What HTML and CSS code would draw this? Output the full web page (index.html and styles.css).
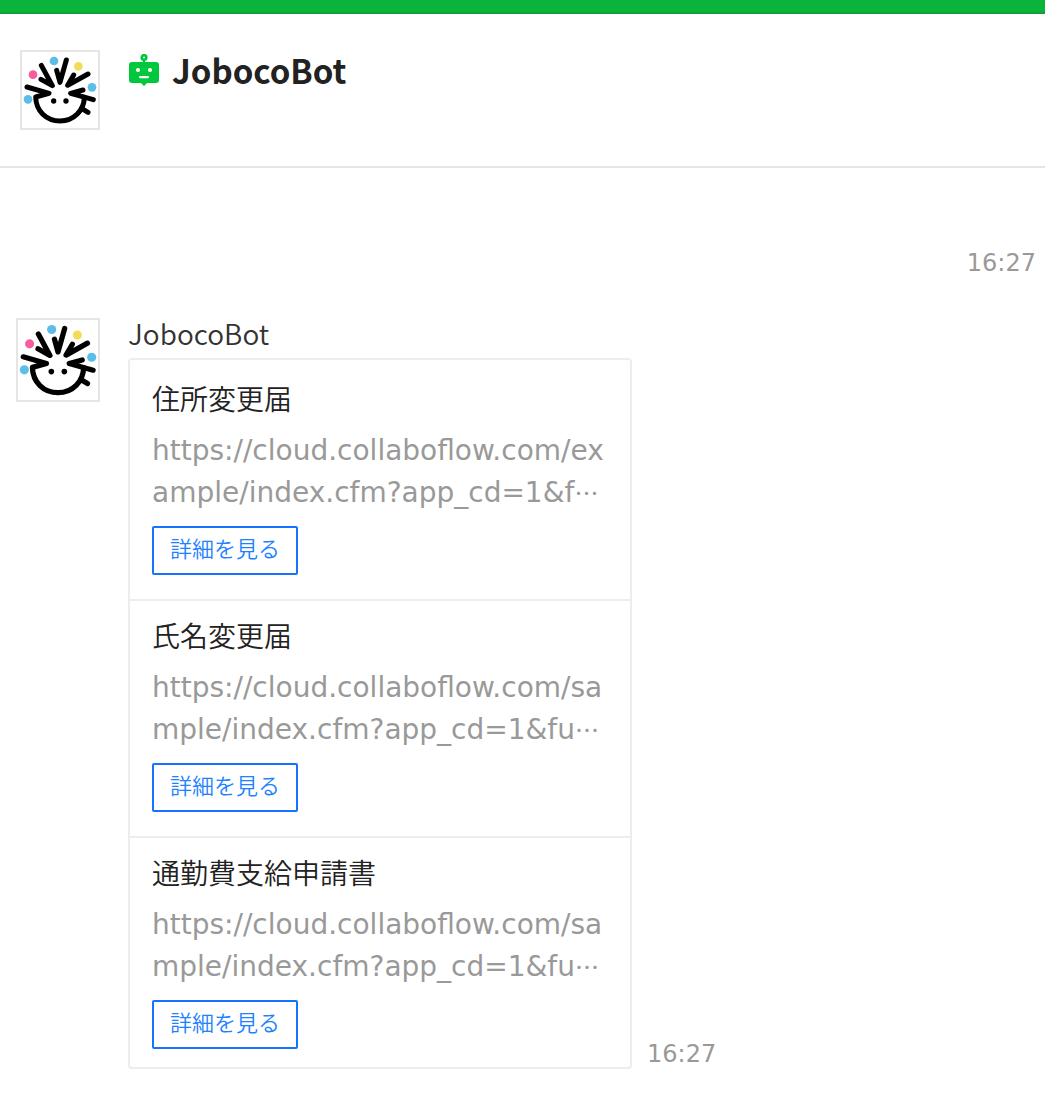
FILE: index.html
```html
<!DOCTYPE html>
<html lang="ja">
<head>
  <meta charset="utf-8">
  <title>JobocoBot</title>
  <meta name="viewport" content="width=device-width, initial-scale=1">
  <link rel="stylesheet" href="styles.css">
</head>
<body>
  <!-- shared avatar drawing -->
  <svg class="symbols" aria-hidden="true">
    <symbol id="joboco" viewBox="66 156 228 228">
      <g fill="none" stroke="#000" stroke-width="15" stroke-linecap="round" stroke-linejoin="round">
        <path d="M81 261L147 280L107 291C108 333 139 363 180 363C222 363 252 331 253 292"/>
        <path d="M249 270L212 280L280 299"/>
        <path d="M246 326L264 337"/>
        <path d="M124 196L157 257L123 238"/>
        <path d="M170 211L180 247L199 180"/>
        <path d="M221 225L203 256L264 222"/>
      </g>
      <circle cx="161" cy="303" r="8"/>
      <circle cx="198" cy="303" r="8"/>
      <circle cx="99" cy="224" r="13" fill="#f75c9d"/>
      <circle cx="162" cy="183" r="13" fill="#5bbde8"/>
      <circle cx="235" cy="199" r="13" fill="#f3dd58"/>
      <circle cx="276" cy="262" r="13" fill="#5bbde8"/>
      <circle cx="84" cy="298" r="13" fill="#5bbde8"/>
    </symbol>
  </svg>

  <div class="top-bar"></div>
  <header class="header">
    <svg class="avatar" role="img" aria-label="JobocoBot"><use href="#joboco"/></svg>
    <div class="header-name">
      <svg class="bot-icon" viewBox="0 0 32 32" aria-hidden="true">
        <circle cx="16" cy="3.5" r="2.3" fill="none" stroke="#00c73c" stroke-width="2.6"/>
        <path d="M15 5h2v4h-2z" fill="#00c73c"/>
        <path d="M4 8h24q3 0 3 3v15q0 3-3 3h-9l-3 3-3-3H4q-3 0-3-3V11q0-3 3-3z" fill="#00c73c"/>
        <circle cx="10" cy="16" r="2.1" fill="#fff"/>
        <circle cx="22" cy="16" r="2.1" fill="#fff"/>
        <rect x="11" y="22" width="10" height="2.2" rx="1" fill="#fff"/>
      </svg>
      <h1 class="title">JobocoBot</h1>
    </div>
  </header>

  <main class="chat">
    <div class="sent-time">16:27</div>
    <div class="message">
      <svg class="avatar avatar-large" role="img" aria-label="JobocoBot"><use href="#joboco"/></svg>
      <div class="message-body">
        <div class="sender">JobocoBot</div>
        <div class="bubble-row">
          <ul class="list">
            <li class="item">
              <h2 class="item-title">住所変更届</h2>
              <p class="item-url">https://cloud.collaboflow.com/ex<br>ample/index.cfm?app_cd=1&amp;f<span class="dots">…</span></p>
              <button class="detail" type="button">詳細を見る</button>
            </li>
            <li class="item">
              <h2 class="item-title">氏名変更届</h2>
              <p class="item-url">https://cloud.collaboflow.com/sa<br>mple/index.cfm?app_cd=1&amp;fu<span class="dots">…</span></p>
              <button class="detail" type="button">詳細を見る</button>
            </li>
            <li class="item">
              <h2 class="item-title">通勤費支給申請書</h2>
              <p class="item-url">https://cloud.collaboflow.com/sa<br>mple/index.cfm?app_cd=1&amp;fu<span class="dots">…</span></p>
              <button class="detail" type="button">詳細を見る</button>
            </li>
          </ul>
          <span class="time">16:27</span>
        </div>
      </div>
    </div>
  </main>
</body>
</html>
```
FILE: styles.css
```css
* {
  box-sizing: border-box;
}

body {
  margin: 0;
  background: #fff;
  color: #222;
  font-family: "DejaVu Sans", "Noto Sans CJK JP", sans-serif;
}

.symbols {
  display: none;
}

/* CSS for the header */
.top-bar {
  height: 14px;
  background: #0ab43b;
  border-bottom: 2px solid #0ca237;
}

.header {
  display: flex;
  align-items: flex-start;
  gap: 28px;
  padding: 36px 20px;
  border-bottom: 2px solid #e5e5e5;
}

.avatar {
  flex: none;
  width: 80px;
  height: 80px;
  border: 2px solid #e5e5e5;
  background: #fff;
}

.avatar-large {
  width: 84px;
  height: 84px;
}

.header-name {
  display: flex;
  align-items: center;
  gap: 12px;
  height: 40px;
}

.bot-icon {
  width: 32px;
  height: 32px;
}

.title {
  margin: 0;
  font-family: "Noto Sans CJK JP", sans-serif;
  font-size: 33px;
  line-height: 40px;
  font-weight: bold;
}

/* CSS for the messages */
.chat {
  padding: 80px 9px 32px 16px;
}

.sent-time,
.time {
  color: #999;
  font-size: 24px;
  line-height: 30px;
}

.sent-time {
  text-align: right;
}

.message {
  display: flex;
  gap: 28px;
  margin-top: 40px;
}

.message-body {
  flex: 1;
}

.sender {
  color: #333;
  font-family: "Noto Sans CJK JP", sans-serif;
  font-size: 28px;
  font-weight: 350;
  line-height: 30px;
  margin-bottom: 10px;
}

.bubble-row {
  display: flex;
  align-items: flex-end;
  gap: 15px;
}

/* CSS for the list */
.list {
  width: 504px;
  margin: 0;
  padding: 4px 0 0;
  list-style: none;
  border: 2px solid #ededed;
  border-radius: 4px;
}

.item {
  padding: 13px 22px 24px;
  border-bottom: 2px solid #ededed;
}

.item:last-child {
  padding-bottom: 18px;
  border-bottom: 0;
}

.item-title {
  margin: 0 0 11px;
  font-family: "Noto Sans CJK JP", sans-serif;
  font-size: 28px;
  line-height: 42px;
  font-weight: 350;
}

.item-url {
  margin: 0 0 12px;
  color: #999;
  font-size: 28px;
  line-height: 42px;
  white-space: nowrap;
}

.dots {
  font-family: "Noto Sans CJK JP", sans-serif;
  font-size: 24px;
  line-height: 28px;
}

.detail {
  display: block;
  height: 49px;
  padding: 0 16px 8px;
  border: 2px solid #1673ff;
  border-radius: 2px;
  background: #fff;
  color: #1e82ff;
  font-family: "Noto Sans CJK JP", sans-serif;
  font-size: 22px;
  font-weight: 350;
  cursor: pointer;
}
```
